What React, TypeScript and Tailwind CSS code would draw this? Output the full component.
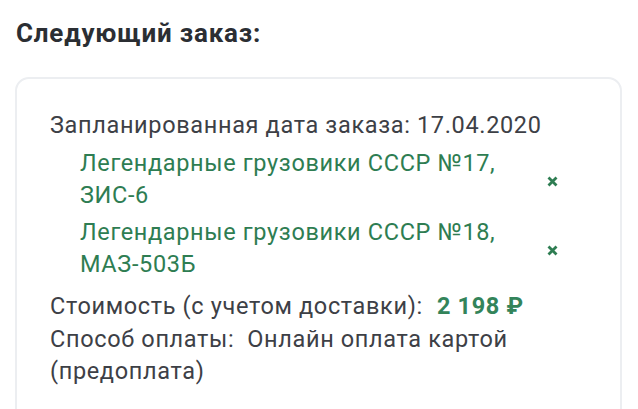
import React from 'react'

const items = [
  { id: 17, title: 'Легендарные грузовики СССР №17, ЗИС-6' },
  { id: 18, title: 'Легендарные грузовики СССР №18, МАЗ-503Б' },
]

function RemoveIcon() {
  return (
    <svg width="11" height="11" viewBox="0 0 11 11" className="shrink-0">
      <path d="M1.5 1.5 L9.5 9.5 M9.5 1.5 L1.5 9.5" stroke="#2e7d52" strokeWidth="2.8" strokeLinecap="butt" />
    </svg>
  )
}

export default function App() {
  return (
    <div
      className="w-[638px] h-[409px] overflow-hidden bg-white"
      style={{ fontFamily: 'Roboto, "Noto Sans", sans-serif' }}
    >
      {/* Header */}
      <h2 className="pl-[16px] pt-[17px] text-[26px] leading-[32px] tracking-[0.8px] font-bold text-[#2b2e33]">
        Следующий заказ:
      </h2>

      {/* Order card */}
      <div className="mt-[28px] ml-[15px] w-[607px] h-[400px] rounded-[14px] border-2 border-[#eceef1] pl-[33px] pt-[30px] text-[23.5px] leading-[32px] tracking-[0.65px] text-[#3d4046]">
        <p>Запланированная дата заказа: 17.04.2020</p>

        <div className="mt-[6px] flex flex-col gap-[5px]">
          {items.map((item) => (
            <div key={item.id} className="flex items-center pl-[30px]">
              <span className="w-[450px] text-[#2e7d52]">{item.title}</span>
              <span className="ml-[17px] flex items-center pt-[4px]">
                <RemoveIcon />
              </span>
            </div>
          ))}
        </div>

        <p className="mt-[10px]">
          Стоимость (с учетом доставки):
          <span className="ml-[14px] font-bold text-[#33845a]">2 198 ₽</span>
        </p>
        <p className="mt-[1px] w-[480px]">
          Способ оплаты:&nbsp; Онлайн оплата картой (предоплата)
        </p>
      </div>
    </div>
  )
}
